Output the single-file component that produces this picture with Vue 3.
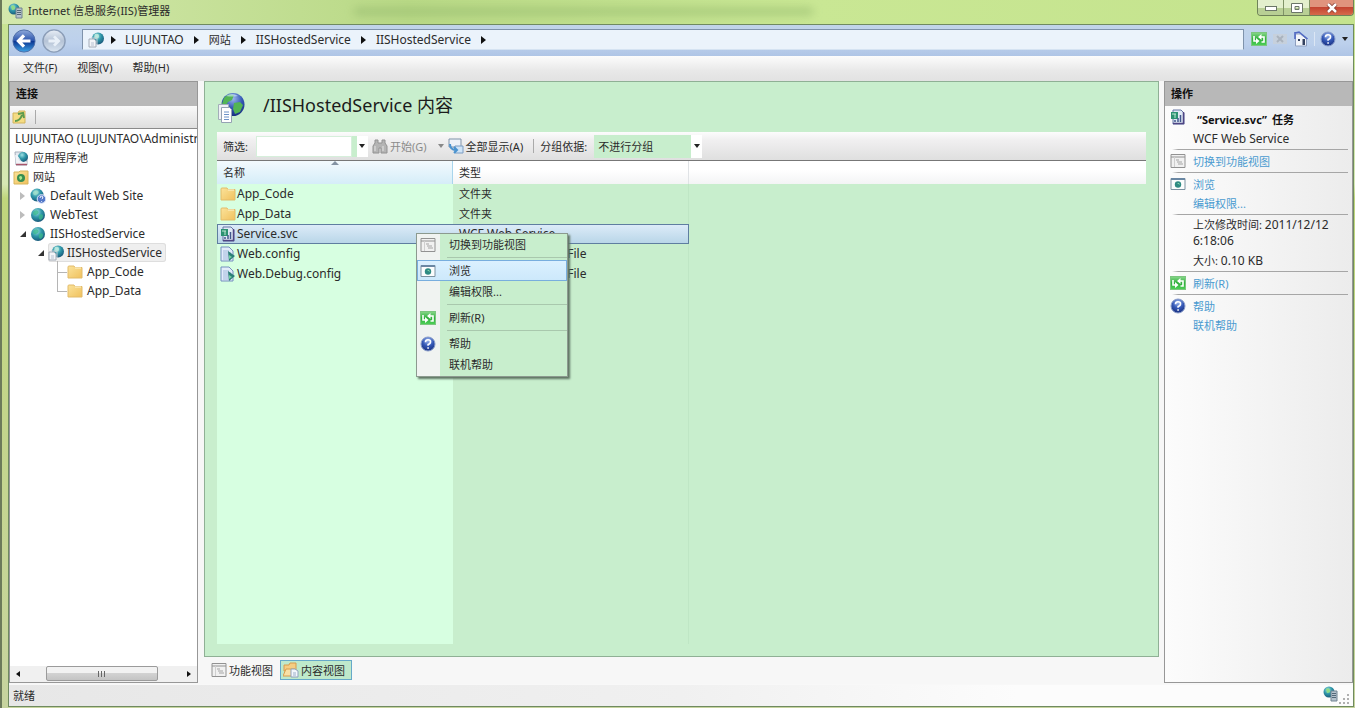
<script setup>
import { ref } from 'vue'

const filter = ref('')
const grouping = ref('不进行分组')
const crumbs = ['LUJUNTAO', '网站', 'IISHostedService', 'IISHostedService']
const menus = ['文件(F)', '视图(V)', '帮助(H)']

const tree = [
  { label: 'LUJUNTAO (LUJUNTAO\\Administrator)', level: 'root' },
  { label: '应用程序池', level: 'l1', icon: 'pool' },
  { label: '网站', level: 'l1', icon: 'sites' },
  { label: 'Default Web Site', level: 'l2', icon: 'globe-q', toggle: 'closed' },
  { label: 'WebTest', level: 'l2', icon: 'globe', toggle: 'closed' },
  { label: 'IISHostedService', level: 'l2', icon: 'globe', toggle: 'open' },
  { label: 'IISHostedService', level: 'l3', icon: 'app', toggle: 'open', selected: true },
  { label: 'App_Code', level: 'l4', icon: 'folder' },
  { label: 'App_Data', level: 'l4', icon: 'folder', last: true },
]

const files = [
  { name: 'App_Code', type: '文件夹', icon: 'folder' },
  { name: 'App_Data', type: '文件夹', icon: 'folder' },
  { name: 'Service.svc', type: 'WCF Web Service', icon: 'svc', selected: true },
  { name: 'Web.config', type: 'XML Configuration File', icon: 'config' },
  { name: 'Web.Debug.config', type: 'XML Configuration File', icon: 'config' },
]

const context = [
  [{ label: '切换到功能视图', icon: 'feature' }],
  [{ label: '浏览', icon: 'browse', hot: true }, { label: '编辑权限...' }],
  [{ label: '刷新(R)', icon: 'refresh' }],
  [{ label: '帮助', icon: 'help' }, { label: '联机帮助' }],
]
</script>

<template>
  <div class="window">
    <svg class="defs" aria-hidden="true">
      <defs>
        <radialGradient id="g-globe" cx="0.4" cy="0.3" r="0.8">
          <stop offset="0" stop-color="#9fe0e4" />
          <stop offset="0.45" stop-color="#2f97a8" />
          <stop offset="1" stop-color="#134a70" />
        </radialGradient>
        <radialGradient id="g-blue" cx="0.5" cy="0.25" r="0.8">
          <stop offset="0" stop-color="#9db8ee" />
          <stop offset="0.5" stop-color="#3457b5" />
          <stop offset="1" stop-color="#142a78" />
        </radialGradient>
        <linearGradient id="g-folder" x1="0" y1="0" x2="1" y2="1">
          <stop offset="0" stop-color="#fbe39b" />
          <stop offset="1" stop-color="#f0c15d" />
        </linearGradient>
        <linearGradient id="g-back" x1="0" y1="0" x2="0" y2="1">
          <stop offset="0" stop-color="#8fa9da" />
          <stop offset="0.48" stop-color="#2c56ae" />
          <stop offset="0.5" stop-color="#0a3391" />
          <stop offset="1" stop-color="#3fa5e6" />
        </linearGradient>
        <linearGradient id="g-fwd" x1="0" y1="0" x2="0" y2="1">
          <stop offset="0" stop-color="#e8eef6" />
          <stop offset="0.5" stop-color="#b5c3d6" />
          <stop offset="1" stop-color="#dbe6f2" />
        </linearGradient>
        <linearGradient id="g-green" x1="0" y1="0" x2="0" y2="1">
          <stop offset="0" stop-color="#8ad98c" />
          <stop offset="0.5" stop-color="#2fae3c" />
          <stop offset="1" stop-color="#4fd158" />
        </linearGradient>
      </defs>
      <symbol id="i-globe" viewBox="0 0 16 16">
        <circle cx="8" cy="8" r="7" fill="url(#g-globe)" />
        <path d="M3 5q3-3 5-1t-2 4q-3 1-3-3zM9 8q4-2 4 1t-3 4q-2-2-1-5z" fill="#3bb98c" opacity=".75" />
      </symbol>
      <symbol id="i-globe-q" viewBox="0 0 16 16">
        <circle cx="7" cy="7" r="6.5" fill="url(#g-globe)" />
        <path d="M3 4q3-3 5-1t-2 4q-3 1-3-3z" fill="#a5e2c8" opacity=".7" />
        <circle cx="11.5" cy="11" r="4.3" fill="#5277c8" stroke="#dfe8fa" />
        <path d="M10 10q0-2 1.7-1.8t1 2l-1 1M11.6 13v.8" fill="none" stroke="#fff" />
      </symbol>
      <symbol id="i-app" viewBox="0 0 16 16">
        <circle cx="10" cy="6.5" r="6" fill="url(#g-globe)" />
        <path d="M7 2q4-1 4 2t-3 3-1-5z" fill="#c4eee0" opacity=".8" />
        <path d="M1 7h5l2 2v6H1z" fill="#f3f5f8" stroke="#a4acb8" />
        <path d="M3 6h5l1 1v6" fill="none" stroke="#c3cad4" />
        <path d="M3 11h3M3 13h3" stroke="#b7c2d2" />
      </symbol>
      <symbol id="i-pool" viewBox="0 0 16 16">
        <path d="M2 2h8l4 3v10H3z" fill="#e5eaf0" stroke="#a5aebb" />
        <circle cx="10" cy="7" r="5" fill="url(#g-globe)" />
        <path d="M2 5q3 0 5 4t7 3v2H3z" fill="#f3f6f9" opacity=".85" />
        <path d="M3 14.5h11" stroke="#a8556b" stroke-width="1.5" />
      </symbol>
      <symbol id="i-sites" viewBox="0 0 16 16">
        <path d="M1 3h5l1-1h8v13H1z" fill="url(#g-folder)" stroke="#d8b65c" />
        <circle cx="8" cy="9" r="4" fill="#368d50" />
        <path d="M6 8q2-2 3 0t-2 3z" fill="#a7e58b" />
      </symbol>
      <symbol id="i-folder" viewBox="0 0 16 16">
        <path d="M1 3q0-1 1-1h5l1 1.5h7V14H1z" fill="url(#g-folder)" stroke="#e2bb6a" />
        <path d="M8 4h6" stroke="#fdf3ce" />
      </symbol>
      <symbol id="i-svc" viewBox="0 0 16 16">
        <path d="M3 1h8l3 3v11H3z" fill="#dfe9f4" stroke="#6676a5" />
        <path d="M13.5 3v11.5H3" fill="none" stroke="#4f4584" stroke-width="1.5" />
        <path d="M1 3h7v7H1z" fill="#2b9272" />
        <path d="M2 5h4M5 5v4" stroke="#bfe9d2" />
        <path d="M5 13v-2M8 13V9M10.500 13V6" stroke="#42588c" stroke-width="1.500" />
      </symbol>
      <symbol id="i-config" viewBox="0 0 16 16">
        <path d="M1 1h8l4 4v10H1z" fill="#e2ecfb" stroke="#7590bd" />
        <path d="M3 5h6M3 7h8M3 9h6M3 11h6M3 13h6" stroke="#a3badb" />
        <path d="M8 5l7 5-6 5z" fill="#2b7f78" />
        <path d="M9 9l3 2-3 2z" fill="#74d1a1" />
      </symbol>
      <symbol id="i-feature" viewBox="0 0 16 16">
        <path d="M1 1.500h14v13H1z" fill="#f1f1f1" stroke="#929292" />
        <path d="M1 4h14" stroke="#929292" />
        <path d="M4.500 4v10" stroke="#cfcfcf" />
        <path d="M6 7h3M7 9h5M8 11h5" stroke="#a5a5a5" />
      </symbol>
      <symbol id="i-browse" viewBox="0 0 16 16">
        <path d="M1 2.500h14v11H1z" fill="#fbfdfd" stroke="#7c92a1" />
        <path d="M1 3h14" stroke="#6a87a3" stroke-width="2" />
        <circle cx="8" cy="8.500" r="3.200" fill="#2f8b83" />
        <path d="M7 7h2l1 2z" fill="#8fdcae" />
      </symbol>
      <symbol id="i-refresh" viewBox="0 0 16 16">
        <rect x="0.500" y="1.500" width="15" height="13" fill="url(#g-green)" stroke="#7cc67f" />
        <path d="M3 5v5h3M9.500 6h3.500v5h-2.500" fill="none" stroke="#fff" stroke-width="1.600" />
        <path d="M5 7l3.500 3L5 13zM10.500 3L7 6l3.500 3z" fill="#fff" />
      </symbol>
      <symbol id="i-help" viewBox="0 0 16 16">
        <circle cx="8" cy="8" r="7" fill="url(#g-blue)" stroke="#8a9dcb" />
        <path d="M5.500 6.200q0-2.400 2.500-2.400t2.500 2-2.400 2.700v1.300M8.100 11.200v1.600" fill="none" stroke="#fff" stroke-width="1.600" />
      </symbol>
      <symbol id="i-stop" viewBox="0 0 16 16">
        <rect x="1" y="3" width="14" height="10" fill="#c6d0dc" />
        <path d="M5 5l6 6M11 5l-6 6" stroke="#aab3be" stroke-width="2" />
      </symbol>
      <symbol id="i-home" viewBox="0 0 16 16">
        <path d="M2.500 3h5l6 5v7h-11z" fill="#f2f5fa" stroke="#8e9fc0" />
        <path d="M2 8V1M2 2l4-1 8.500 7" fill="none" stroke="#5169c3" stroke-width="1.600" />
        <path d="M5 8h2v2H5zM9.500 8h2.500v6H9.500z" fill="#33415f" />
      </symbol>
      <symbol id="i-connect" viewBox="0 0 16 16">
        <path d="M1 4h5l1-2h6v12H1z" fill="#f5dc83" stroke="#d1b45c" />
        <path d="M3 12q5 0 7-6M6 5l5-1 1 5" fill="none" stroke="#5c9b4c" stroke-width="2" />
      </symbol>
      <symbol id="i-find" viewBox="0 0 16 16">
        <path d="M3 2h3v3h4V2h3v3l2 3v7H9v-5H7v5H1V8l2-3z" fill="#b4b4b4" stroke="#929292" />
        <path d="M3 8v5M11 8v5" stroke="#e4e4e4" />
      </symbol>
      <symbol id="i-showall" viewBox="0 0 16 16">
        <path d="M1 1h12v8H1z" fill="#edf2f8" stroke="#8194aa" />
        <path d="M7 8h8v7H7z" fill="#cfe4f7" stroke="#7b9cc2" />
        <path d="M2 6q0 6 6 6M6 9l3 3-3 3" fill="none" stroke="#4a93cf" stroke-width="2" />
      </symbol>
      <symbol id="i-content" viewBox="0 0 16 16">
        <path d="M1 3h5l1-2h6v8H1z" fill="#f5cd82" stroke="#d79c4c" />
        <path d="M3 7h9l-3 7H0z" fill="#f9e0a5" stroke="#d79c4c" />
        <path d="M8 7h4l3 2v6H8z" fill="#f2f6fb" stroke="#91a3bd" />
        <path d="M10 11h3M10 13h3" stroke="#9db0ca" />
      </symbol>
      <symbol id="i-server" viewBox="0 0 16 16">
        <circle cx="6" cy="6" r="5.500" fill="url(#g-globe)" />
        <path d="M3 3q3-2 4 1t-3 3z" fill="#8fdc86" />
        <path d="M8 5h6v10H8z" fill="#b6c2cd" stroke="#718391" />
        <path d="M9 7.500h4M9 9.500h4M9 11.500h4" stroke="#536878" />
      </symbol>
      <symbol id="i-page-globe" viewBox="0 0 30 32">
        <circle cx="16" cy="12.500" r="11.500" fill="url(#g-blue)" />
        <path d="M7 6q4-5 10-3l-2 5-4 2-3 5-3-3zM17 11l6-1 3 3-3 7-5 2-2-5z" fill="#53b554" />
        <path d="M9 4q6-4 12 0-6 1-12 0z" fill="#d4efff" opacity=".6" />
        <path d="M1.500 12.500h10v15h-10z" fill="#eef1f5" stroke="#a3adb9" />
        <path d="M4.500 15.500h8l2 2v13h-10z" fill="#fff" stroke="#95a2b3" />
        <path d="M7 20h5M7 22.500h5M7 25h5M7 27.500h5" stroke="#6c92c7" />
      </symbol>
    </svg>

    <header class="titlebar">
      <svg class="ic"><use href="#i-server" /></svg>
      <h1>Internet 信息服务(IIS)管理器</h1>
      <span class="haze"></span>
      <div class="caption">
        <button class="cap" aria-label="最小化"><svg width="14" height="8" viewBox="0 0 14 8"><rect x="1.500" y="2.500" width="11" height="4" fill="#fff" stroke="#6b7668" /></svg></button>
        <button class="cap" aria-label="最大化"><svg width="14" height="12" viewBox="0 0 14 12"><path d="M1.500 1.500h11v9h-11zM5 4.500h4v3H5z" fill="#fff" fill-rule="evenodd" stroke="#6b7668" /></svg></button>
        <button class="cap close" aria-label="关闭"><svg width="12" height="10" viewBox="0 0 12 10"><path d="M2 1l8 8M10 1L2 9" stroke="#7d3328" stroke-width="4" /><path d="M2 1l8 8M10 1L2 9" stroke="#fff" stroke-width="2.500" /></svg></button>
      </div>
    </header>

    <div class="client">
      <nav class="navbar">
        <button class="round" aria-label="后退"><svg viewBox="0 0 26 26"><circle cx="13" cy="13" r="12" fill="url(#g-back)" stroke="#4b6aa6" /><path d="M20 13H8M13 7l-6 6 6 6" fill="none" stroke="#fff" stroke-width="3.500" /></svg></button>
        <button class="round" aria-label="前进"><svg viewBox="0 0 26 26"><circle cx="13" cy="13" r="12" fill="url(#g-fwd)" stroke="#8b9db7" stroke-width="1.500" /><path d="M7 13h11M13 8l5 5-5 5" fill="none" stroke="#e9f0f8" stroke-width="3" /></svg></button>
        <div class="address">
          <svg class="ic"><use href="#i-app" /></svg>
          <i class="tri first"></i>
          <template v-for="(c, i) in crumbs" :key="i">
            <button class="crumb" :class="{ cjk: c === '网站' }">{{ c }}</button><i class="tri"></i>
          </template>
        </div>
        <div class="tools">
          <button aria-label="刷新"><svg class="ic"><use href="#i-refresh" /></svg></button>
          <button aria-label="停止"><svg class="ic"><use href="#i-stop" /></svg></button>
          <button aria-label="主页"><svg class="ic"><use href="#i-home" /></svg></button>
          <i class="vsep"></i>
          <button aria-label="帮助" class="helpbtn"><svg class="ic"><use href="#i-help" /></svg><i class="down"></i></button>
        </div>
      </nav>

      <div class="menubar"><button v-for="m in menus" :key="m">{{ m }}</button></div>

      <div class="body">
        <aside class="panel left">
          <h2>连接</h2>
          <div class="strip"><button aria-label="连接到服务器"><svg class="ic"><use href="#i-connect" /></svg></button><i class="vsep"></i></div>
          <ul class="tree">
            <li v-for="(n, i) in tree" :key="i" :class="[n.level, { last: n.last }]">
              <i v-if="n.toggle" class="toggle" :class="n.toggle"></i>
              <button :class="{ selected: n.selected, cjk: n.level === 'l1' }">
                <svg v-if="n.icon" class="ic"><use :href="'#i-' + n.icon" /></svg>
                <span>{{ n.label }}</span>
              </button>
            </li>
          </ul>
          <div class="scroll">
            <button aria-label="向左滚动"><i class="tri flip"></i></button>
            <div class="track"><div class="thumb"><i></i><i></i><i></i></div></div>
            <button aria-label="向右滚动"><i class="tri"></i></button>
          </div>
        </aside>

        <div class="center">
          <main class="content">
            <div class="heading"><svg class="big"><use href="#i-page-globe" /></svg><h2>/IISHostedService 内容</h2></div>
            <div class="toolbar">
              <label for="filter">筛选:</label>
              <div class="combo"><input id="filter" v-model="filter" type="text"><button aria-label="筛选历史"><i class="down"></i></button></div>
              <button class="tb off" disabled><svg class="ic"><use href="#i-find" /></svg>开始(G)<i class="down"></i></button>
              <button class="tb all"><svg class="ic"><use href="#i-showall" /></svg>全部显示(A)</button>
              <i class="vsep"></i>
              <label for="group">分组依据:</label>
              <div class="selectbox"><select id="group" v-model="grouping"><option>不进行分组</option></select><span><i class="down"></i></span></div>
            </div>
            <div class="listing">
              <table>
                <colgroup><col class="c1"><col class="c2"><col></colgroup>
                <thead><tr><th class="sorted">名称<i class="sort"></i></th><th>类型</th><th></th></tr></thead>
                <tbody>
                  <tr v-for="f in files" :key="f.name" :class="{ selected: f.selected }">
                    <td><div class="name"><svg class="ic"><use :href="'#i-' + f.icon" /></svg>{{ f.name }}</div></td>
                    <td :class="{ cjk: f.icon === 'folder' }">{{ f.type }}</td>
                    <td></td>
                  </tr>
                  <tr class="rest"><td></td><td></td><td></td></tr>
                </tbody>
              </table>
              <div class="context" role="menu">
                <div v-for="(g, i) in context" :key="i" class="group">
                  <button v-for="m in g" :key="m.label" role="menuitem" :class="{ hot: m.hot }">
                    <svg v-if="m.icon" class="ic"><use :href="'#i-' + m.icon" /></svg>
                    <span>{{ m.label }}</span>
                  </button>
                </div>
              </div>
            </div>
          </main>
          <div class="tabs">
            <button><svg class="ic"><use href="#i-feature" /></svg>功能视图</button>
            <button class="active"><svg class="ic"><use href="#i-content" /></svg>内容视图</button>
          </div>
        </div>

        <aside class="panel right">
          <h2>操作</h2>
          <section>
            <svg class="ic"><use href="#i-svc" /></svg>
            <p class="task">“Service.svc”<span class="cjk">任务</span></p>
            <p class="lat">WCF Web Service</p>
          </section>
          <section><svg class="ic"><use href="#i-feature" /></svg><p><a href="#">切换到功能视图</a></p></section>
          <section><svg class="ic"><use href="#i-browse" /></svg><p><a href="#">浏览</a></p><p><a href="#">编辑权限...</a></p></section>
          <section><p class="time">上次修改时间: <span class="lat">2011/12/12 6:18:06</span></p><p>大小: <span class="lat">0.10 KB</span></p></section>
          <section><svg class="ic"><use href="#i-refresh" /></svg><p><a href="#">刷新(R)</a></p></section>
          <section><svg class="ic"><use href="#i-help" /></svg><p><a href="#">帮助</a></p><p><a href="#">联机帮助</a></p></section>
        </aside>
      </div>

      <footer class="status">
        <span>就绪</span>
        <div class="corner">
          <svg class="ic"><use href="#i-server" /></svg>
          <svg width="12" height="12" viewBox="0 0 12 12" fill="#b0b0b0"><path d="M8 0h2v2H8zM4 4h2v2H4zM8 4h2v2H8zM0 8h2v2H0zM4 8h2v2H4zM8 8h2v2H8z" /></svg>
        </div>
      </footer>
    </div>
  </div>
</template>

<style>
body { margin: 0; }
</style>

<style scoped>
* { box-sizing: border-box; }
.window {
  display: flex; flex-direction: column; min-height: 100vh; padding: 0 1px 1px 6px;
  border-left: 2px solid #6c7a5a; overflow: hidden;
  background: linear-gradient(#c6e38e, #d6e8b4 26%, #c0d67c 28%, #c7d49f);
  font-family: "Noto Sans", "Noto Sans CJK SC", sans-serif; font-size: 11px; line-height: 19px; color: #2b2b2b;
}
.defs { position: absolute; width: 0; height: 0; }
button { font: inherit; color: inherit; background: none; border: 0; padding: 0; margin: 0; white-space: nowrap; display: flex; align-items: center; }
h1, h2, p, ul { margin: 0; padding: 0; font-size: inherit; font-weight: normal; }
.ic { width: 16px; height: 16px; flex: none; display: block; }
.cjk { font-size: 11px; }
.down { border: 3px solid transparent; border-top: 4px solid #222; border-bottom: 0; }
.tri { border: 4px solid transparent; border-left: 5px solid #111; border-right: 0; flex: none; }
.flip { transform: rotate(180deg); }
.vsep { width: 1px; height: 14px; background: #aaa; flex: none; }

.titlebar { display: flex; height: 24px; background: linear-gradient(90deg, #d3e8ac, #b9d986 30%, #c9e794 60%, #c4e38d); margin-left: -6px; padding-left: 6px; position: relative; }
.titlebar .ic { margin-top: 3px; }
.titlebar h1 { margin: 1px 0 0 4px; z-index: 1; }
.haze { position: absolute; left: 26%; right: 40%; top: 8px; height: 7px; background: #8fb46a; opacity: .6; filter: blur(5px); }
.caption { margin-left: auto; display: flex; height: 16px; border: 1px solid #6f8259; border-top: 0; border-radius: 0 0 4px 4px; overflow: hidden; }
.cap { width: 26px; justify-content: center; background: linear-gradient(#e3efcd 50%, #b8cf94 51%); border-right: 1px solid #809366; }
.close { width: 43px; border: 0; background: linear-gradient(#e0937d 45%, #c44431 50%, #d66a4b); }

.client { flex: 1; display: flex; flex-direction: column; border: 1px solid #6f8a60; background: #f7f7f7; min-width: 0; }
.navbar { display: flex; align-items: center; height: 31px; padding-left: 3px; background: linear-gradient(#c1d4e9, #bcd0ec 60%, #afc5e6); }
.round { width: 24px; height: 24px; margin-right: 6px; }
.round svg { width: 24px; height: 24px; }
.address { flex: 1; display: flex; align-items: center; gap: 7px; height: 21px; margin-left: 10px; padding-left: 5px; background: #ebf3fb; border: 1px solid #7f93ab; border-bottom-color: #d5e3f2; font-size: 12px; margin-top: -2px; }
.address .crumb + .tri { margin: 0 3px; }
.address .first { margin-right: 2px; }
.tools { display: flex; align-items: center; gap: 5px; padding: 0 5px 3px 7px; }
.tools .vsep { background: #dbe6f4; }
.helpbtn { gap: 6px; }
.menubar { display: flex; gap: 20px; height: 25px; padding: 0 0 2px 14px; background: linear-gradient(#fcfcfc, #e8e8e8 60%, #e2e2e2); }

.body { flex: 1; display: flex; padding-bottom: 1px; }
.panel { width: 189px; border: 1px solid #979797; display: flex; flex-direction: column; flex: none; }
.panel h2 { height: 24px; line-height: 23px; padding-left: 6px; font-weight: bold; background: #b8b8b8; color: #111; }
.left { background: #fff; }
.strip { display: flex; align-items: center; gap: 7px; height: 23px; padding-left: 2px; background: linear-gradient(#fafafa, #dedede); border-bottom: 1px solid #8a8a8a; }
.tree { flex: 1; list-style: none; overflow: hidden; font-size: 12px; }
.tree li { display: flex; align-items: center; height: 19px; position: relative; }
.tree button { height: 19px; gap: 4px; }
.tree .root { padding-left: 5px; }
.tree .l1 { padding-left: 3px; }
.tree .l2 { padding-left: 8px; }
.tree .l3 { padding-left: 26px; }
.tree .l4 { padding-left: 57px; }
.tree .l4::before { content: ""; position: absolute; left: 47px; top: -1px; width: 9px; height: 11px; border: solid #b5b5b5; border-width: 0 0 1px 1px; }
.tree .last::before { top: -9px; height: 19px; }
.tree .selected { gap: 3px; background: #efefef; border-radius: 3px; box-shadow: inset 0 0 0 1px #dedede; padding-right: 4px; }
.toggle { width: 12px; height: 12px; flex: none; }
.toggle::before { content: ""; display: block; margin: 2px 0 0 2px; width: 0; height: 0; }
.closed::before { border: 4px solid transparent; border-left: 5px solid #bcbcbc; border-right: 0; }
.open::before { border-left: 6px solid transparent; border-bottom: 6px solid #333; margin-top: 3px; }
.scroll { display: flex; height: 16px; background: #f0f0f0; }
.scroll button { width: 16px; justify-content: center; }
.scroll .tri { border-width: 3px 0 3px 4px; }
.track { flex: 1; display: flex; justify-content: center; padding: 0 15px 0 11px; }
.thumb { width: 112px; height: 15px; border: 1px solid #9b9b9b; border-radius: 2px; background: linear-gradient(#f2f2f2 45%, #d2d2d2 50%, #c4c4c4); display: flex; gap: 2px; justify-content: center; align-items: center; }
.thumb i { width: 1px; height: 6px; background: #666; }

.center { flex: 1; min-width: 0; display: flex; flex-direction: column; padding: 0 5px 0 6px; }
.content { flex: 1; display: flex; flex-direction: column; background: #c8eecd; border: 1px solid #8fb095; padding: 0 12px 12px; }
.heading { display: flex; align-items: center; gap: 16px; height: 50px; padding-bottom: 4px; color: #1c1c1c; }
.heading h2 { font-size: 18px; line-height: 24px; }
.big { width: 30px; height: 32px; margin-top: 6px; }
.toolbar { display: flex; align-items: center; height: 29px; padding-left: 6px; background: linear-gradient(#fcfcfc, #f0eff0 30%, #dfdfdf); border-bottom: 1px solid #777; }
.combo { display: flex; align-items: center; height: 21px; margin-left: 8px; background: #c8eecd; }
.combo input { width: 96px; height: 21px; border: 1px solid #d6efdb; background: #fff; font: inherit; padding: 0 3px; }
.combo button { margin-left: 5px; width: 11px; height: 21px; background: #fff; justify-content: center; }
.tb { margin-left: 4px; gap: 2px; }
.off { color: #8b8b8b; }
.off .down { border-top-color: #888; margin-left: 9px; }
.toolbar .vsep { margin: 0 6px 0 10px; }
.selectbox { position: relative; margin-left: 7px; width: 108px; height: 23px; background: #c8eecd; }
select { width: 100%; height: 23px; padding: 0 4px; font: inherit; color: inherit; border: 0; appearance: none; background: none; }
.selectbox span { position: absolute; right: 0; top: 0; width: 11px; height: 23px; background: #fff; display: flex; align-items: center; justify-content: center; pointer-events: none; }

.listing { flex: 1; display: flex; position: relative; }
table { width: 100%; table-layout: fixed; border-collapse: separate; border-spacing: 0; font-size: 12px; }
.c1 { width: 236px; }
.c2 { width: 236px; }
th { height: 23px; padding: 0 6px; text-align: left; font-weight: normal; font-size: 11px; background: linear-gradient(#fff 40%, #f3f4f5); border-right: 1px solid #e0e3e6; position: relative; }
th:last-child { border: 0; }
th.sorted { background: linear-gradient(#f3fafe, #d5edf8); border-color: #a9d5ec; }
.sort { position: absolute; left: 50%; top: 0; margin-left: -4px; border: 4px solid transparent; border-top: 0; border-bottom: 4px solid #8493a3; }
td { height: 20px; line-height: 20px; padding: 0 6px; overflow: hidden; white-space: nowrap; vertical-align: top; }
td:first-child { background: #d7ffe1; padding: 0 3px; }
td:nth-child(2) { border-right: 1px solid #bfe6c5; }
.name { display: flex; align-items: center; gap: 1px; height: 20px; }
tr.selected td { background: linear-gradient(#dcebf8, #b9d6e8); border: solid #5f7ea0; border-width: 1px 0; line-height: 18px; }
tr.selected td:first-child { border-left-width: 1px; padding-left: 2px; }
tr.selected .name { height: 18px; }
tr.selected td:nth-child(2) { border-right-width: 1px; }
tr.selected td:last-child { background: none; border: 0; }
.rest td { height: auto; }

.context { position: absolute; left: 199px; top: 72px; width: 152px; border: 1px solid #8c9a8f; padding-bottom: 1px; background: linear-gradient(90deg, #f0f3f1 23px, #c8eecd 23px); box-shadow: 2px 2px 2px #5f7463; }
.group + .group { margin-top: 2px; padding-top: 2px; border-top: 1px solid transparent; border-image: linear-gradient(90deg, transparent 31px, #a9c8ad 31px) 1; }
.context button { width: 100%; height: 21px; padding-left: 3px; }
.context span { margin-left: 13px; }
.context button span:first-child { margin-left: 29px; }
.context .hot { background: linear-gradient(#dcf1ff, #cce8fb); box-shadow: inset 0 0 0 1px #78aede; }

.tabs { display: flex; align-items: center; gap: 7px; height: 26px; padding-left: 7px; }
.tabs button { height: 20px; gap: 2px; }
.tabs .active { background: #bfe9cb; border: 1px solid #66a9c9; padding: 0 6px 0 2px; }

.right { background: linear-gradient(90deg, #fcfcfc, #ececec); }
.right section { margin-right: 4px; padding: 2px 0 1px 28px; position: relative; }
.right h2 + section { padding-top: 4px; }
.right section > .ic { position: absolute; left: 5px; top: 3px; }
.right section + section { border-top: 1px solid transparent; border-image: linear-gradient(90deg, transparent 8px, #a6a6a6 14px, #a6a6a6) 1; }
.task { font-weight: bold; color: #111; padding-left: 4px; }
.task .cjk { margin-left: 5px; }
.time { line-height: 16px; padding-bottom: 2px; }
.lat { font-size: 12px; }
a { color: #4a9bd0; text-decoration: none; }

.status { display: flex; justify-content: space-between; height: 22px; padding: 1px 2px 0 4px; background: linear-gradient(90deg, #e7e7e7, #f0f0f0 50%, #fcfcfc 75%); border-top: 1px solid #f8f8f8; }
.corner { display: flex; align-items: flex-end; }
.corner .ic { margin-bottom: 4px; }
</style>
